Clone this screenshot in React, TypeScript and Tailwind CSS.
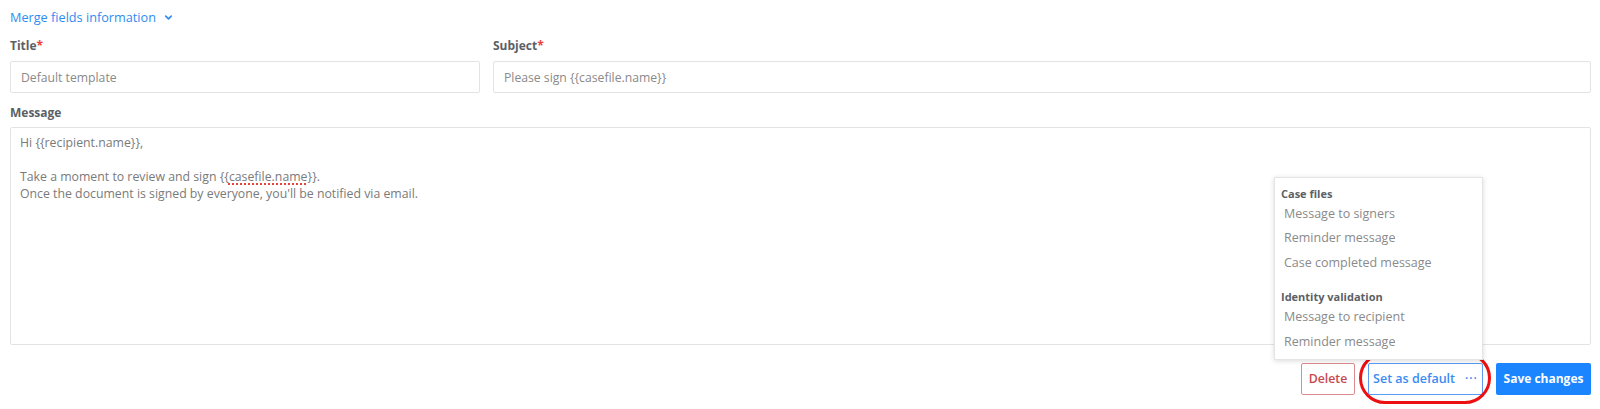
import { ChevronDown } from "lucide-react";

const caseFiles = ["Message to signers", "Reminder message", "Case completed message"];
const identity = ["Message to recipient", "Reminder message"];

function MenuGroup({ title, items, className = "" }: { title: string; items: string[]; className?: string }) {
  return (
    <div className={className}>
      <div className="h-[14px] pl-[6px] text-[11px] leading-[14px] font-bold text-[#5b5f66]">{title}</div>
      {items.map((item, i) => (
        <div key={i} className="h-[24.5px] pl-[9px] pt-[1px] text-[12.5px] leading-[24px] text-[#8a8a8a]">
          {item}
        </div>
      ))}
    </div>
  );
}

function Label({ text, required }: { text: string; required?: boolean }) {
  return (
    <div className="h-[14px] text-[12px] leading-[14px] font-bold text-[#5b5f66]">
      {text}
      {required && <span className="text-[#e8413a]">*</span>}
    </div>
  );
}

export default function App() {
  return (
    <div className="w-[1600px] h-[409px] bg-white pl-[10px] pr-[9px] pt-[9px] font-['Open_Sans',sans-serif]">
      {/* Merge fields toggle */}
      <button className="flex h-4 items-center gap-[7px] text-[12.7px] leading-4 text-[#2f8cf0]">
        Merge fields information
        <ChevronDown size={11} strokeWidth={3.5} />
      </button>

      {/* Title + subject */}
      <div className="mt-[14px] grid grid-cols-[470px_1fr] gap-[13px]">
        <div>
          <Label text="Title" required />
          <input
            readOnly
            value="Default template"
            className="mt-[8px] h-[32px] w-full rounded-[2px] border-[1.5px] border-[#e3e3e3] px-[10px] text-[12.2px] text-[#8a8a8a] outline-none"
          />
        </div>
        <div>
          <Label text="Subject" required />
          <input
            readOnly
            value="Please sign {{casefile.name}}"
            className="mt-[8px] h-[32px] w-full rounded-[2px] border-[1.5px] border-[#e3e3e3] px-[10px] text-[12.2px] text-[#8a8a8a] outline-none"
          />
        </div>
      </div>

      {/* Message */}
      <div className="mt-[13px]">
        <Label text="Message" />
        <div className="mt-[7px] h-[218px] rounded-[2px] border-[1.5px] border-[#e3e3e3] px-[9px] pt-[6px] text-[12.3px] leading-[17px] text-[#7a7a7a]">
          <div>Hi {"{{recipient.name}},"}</div>
          <div className="h-[17px]" />
          <div>
            Take a moment to review and sign {"{{"}
            <span className="underline decoration-dotted decoration-[#e8413a] decoration-[1.5px] underline-offset-2">casefile.name</span>
            {"}}."}
          </div>
          <div>Once the document is signed by everyone, you'll be notified via email.</div>
        </div>
      </div>

      {/* Actions */}
      <div className="mt-[18px] flex justify-end gap-[13px]">
        <button className="h-[32px] w-[54px] rounded-[2px] border border-[#dc8c8f] text-[12.3px] font-semibold text-[#c9484d]">
          Delete
        </button>

        <div className="relative">
          <button className="flex h-[32px] w-[115px] items-center justify-center gap-[10px] rounded-[2px] border border-[#5a9cf5] text-[12.5px] font-semibold text-[#3b8bf5]">
            Set as default
            <span className="text-[12px] tracking-[1px]">···</span>
          </button>

          {/* highlight ring */}
          <div className="pointer-events-none absolute -left-[9px] -right-[8px] -top-[11px] -bottom-[9px] rounded-[26px] border-[3px] border-[#ec1010]" />

          {/* dropdown menu */}
          <div className="absolute bottom-[35px] right-0 w-[209px] border border-[#e4e4e4] bg-white pt-[9px] pb-[6px] shadow-[0_1px_5px_rgba(0,0,0,0.15)]">
            <MenuGroup title="Case files" items={caseFiles} />
            <MenuGroup title="Identity validation" items={identity} className="mt-[16px]" />
          </div>
        </div>

        <button className="h-[32px] w-[95px] rounded-[2px] bg-[#1a85ff] text-[12px] font-bold text-white">
          Save changes
        </button>
      </div>
    </div>
  );
}
